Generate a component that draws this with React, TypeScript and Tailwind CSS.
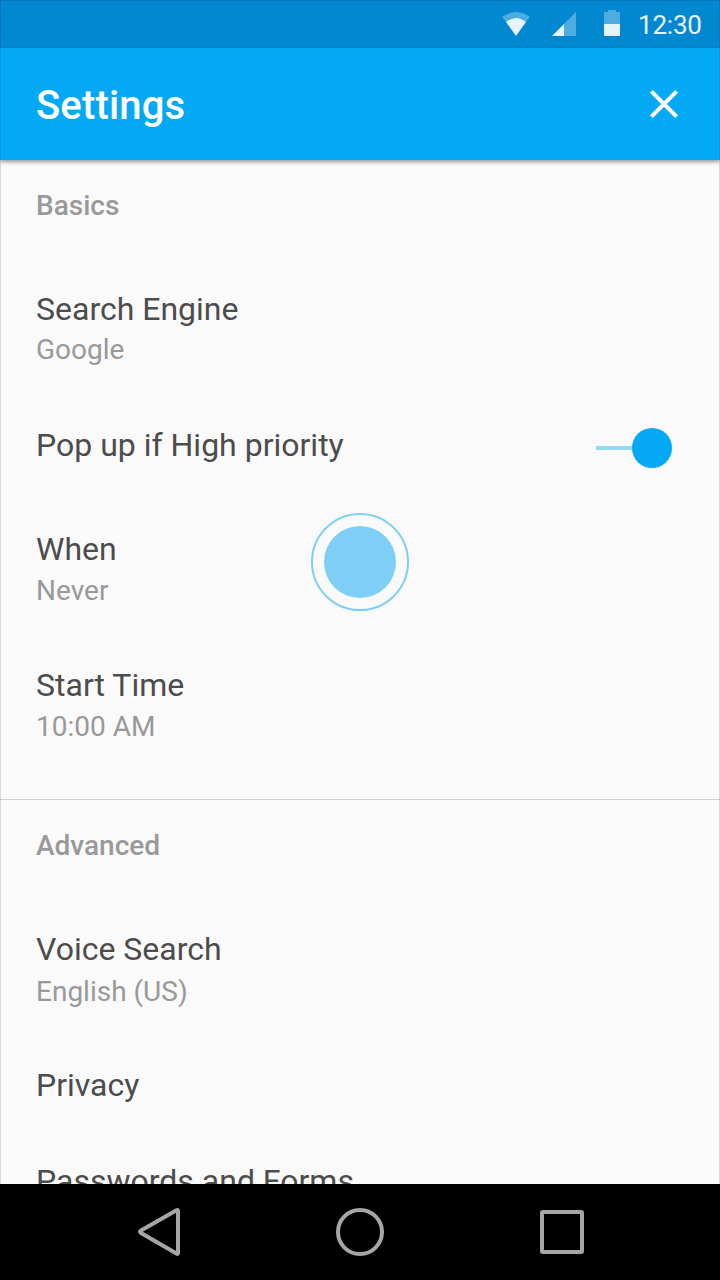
import React from "react";

type RowProps = { title: string; value?: string; className: string; valueClass?: string };

function Row({ title, value, className, valueClass = "mt-1" }: RowProps) {
  return (
    <div className={`flex flex-col pl-9 ${className}`}>
      <span className="h-10 text-[32px] leading-[38px] text-[#4c4c4c] whitespace-nowrap">{title}</span>
      {value && <span className={`text-[28px] leading-9 text-[#999999] whitespace-nowrap ${valueClass}`}>{value}</span>}
    </div>
  );
}

export default function App() {
  return (
    <div className="relative flex h-[1280px] w-[720px] flex-col overflow-hidden bg-[#fafafa] font-['Roboto',sans-serif]">
      <div className="flex h-12 shrink-0 bg-[#0288d1]">
        <svg className="ml-[500px] h-12 w-[124px]" viewBox="500 0 124 48">
          <path d="M502 17Q516 7 530 17L526 22Q516 14 506 22Z" fill="#fff" opacity=".3" />
          <path d="M506 22Q516 14 526 22L516 36Z" fill="#fff" opacity=".9" />
          <path d="M564 24L576 12V36H564Z" fill="#fff" opacity=".3" />
          <path d="M552 36L564 24V36Z" fill="#fff" opacity=".9" />
          <path d="M604 24V13Q604 12 605 12H608V10H616V12H619Q620 12 620 13V24Z" fill="#fff" opacity=".3" />
          <path d="M604 24H620V35Q620 36 619 36H605Q604 36 604 35Z" fill="#fff" opacity=".9" />
        </svg>
        <span className="ml-[14px] text-[26px] leading-[51px] tracking-[-0.2px] text-white/90">12:30</span>
      </div>
      <header className="z-10 flex h-28 shrink-0 items-center justify-between bg-[#03a9f4] pl-9 pr-[40px] shadow-[0_2px_4px_rgba(0,0,0,.4)]">
        <h1 className="pt-[4px] text-[40px] font-medium leading-[48px] tracking-[0.15px] text-white">Settings</h1>
        <svg className="h-8 w-8" viewBox="0 0 32 32"><path d="M3.4 3.4L28.6 28.6M28.6 3.4L3.4 28.6" stroke="#fff" strokeWidth="4" /></svg>
      </header>
      <main className="flex h-[1024px] shrink-0 flex-col overflow-hidden">
        <h2 className="mt-7 h-9 pl-9 text-[28px] font-medium leading-9 text-[#999999]">Basics</h2>
        <Row title="Search Engine" value="Google" className="mt-[66px]" valueClass="mt-[2px]" />
        <div className="mt-[58px] flex h-10 items-center justify-between pl-9 pr-12">
          <span className="h-10 text-[32px] leading-[38px] text-[#4c4c4c]">Pop up if High priority</span>
          <svg className="mt-[4px] h-10 w-[76px]" viewBox="0 0 76 40"><path d="M0 20H40" stroke="#95daf8" strokeWidth="4" /><circle cx="56" cy="20" r="20" fill="#03a9f4" /></svg>
        </div>
        <Row title="When" value="Never" className="mt-[64px]" valueClass="mt-[3px]" />
        <Row title="Start Time" value="10:00 AM" className="mt-[57px]" valueClass="mt-[3px]" />
        <div className="mt-[54px] h-px shrink-0 bg-[#d1d1d1]" />
        <h2 className="mt-7 h-9 pl-9 text-[28px] font-medium leading-9 text-[#999999]">Advanced</h2>
        <Row title="Voice Search" value="English (US)" className="mt-[66px]" valueClass="mt-1" />
        <Row title="Privacy" className="mt-14" />
        <Row title="Passwords and Forms" className="mt-14" />
      </main>
      <nav className="h-24 shrink-0 bg-black">
        <svg className="h-24 w-[720px]" viewBox="0 0 720 96" fill="none" stroke="#a6a6a6" strokeWidth="4" strokeLinejoin="round">
          <path d="M178 27V69Q178 70.5 176.5 69.5L141 49Q139 47.5 141 46.5L176.5 26.3Q178 25.5 178 27Z" /><circle cx="360" cy="48" r="22" /><rect x="542" y="28" width="40" height="40" rx="1" />
        </svg>
      </nav>
      <svg className="absolute left-[310px] top-[512px] h-[100px] w-[100px]" viewBox="0 0 100 100">
        <circle cx="50" cy="50" r="48" fill="none" stroke="#7ecff5" strokeWidth="2" /><circle cx="50" cy="50" r="36" fill="#7ecff5" />
      </svg>
      <div className="pointer-events-none absolute inset-0 z-20 border border-black/[0.12]" />
    </div>
  );
}
